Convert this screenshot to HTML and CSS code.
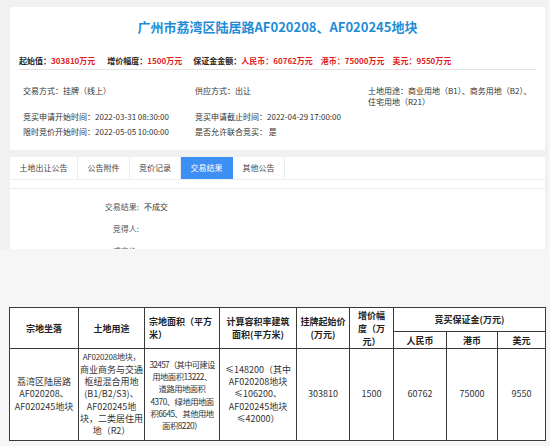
FILE: index.html
```html
<!DOCTYPE html>
<html lang="zh-CN">
<head>
<meta charset="utf-8">
<title>广州市荔湾区陆居路AF020208、AF020245地块</title>
<link rel="stylesheet" href="styles.css">
</head>
<body>
<div class="frame">
  <section class="card">
    <h1 class="title">广州市荔湾区陆居路AF020208、AF020245地块</h1>
    <div class="summary">
      <span class="item gap12"><b class="k">起始值：</b><b class="v">303810万元</b></span>
      <span class="item gap11"><b class="k">增价幅度：</b><b class="v">1500万元</b></span>
      <span class="item gap8"><b class="k">保证金金额：</b><b class="v">人民币：60762万元</b></span>
      <span class="item gap8"><b class="v">港币：75000万元</b></span>
      <span class="item"><b class="v">美元：9550万元</b></span>
    </div>
    <div class="info">
      <div class="cell">交易方式：挂牌（线上）</div>
      <div class="cell">供应方式：出让</div>
      <div class="cell">土地用途：商业用地（B1）、商务用地（B2）、<br>住宅用地（R21）</div>
      <div class="cell">竞买申请开始时间：2022-03-31 08:30:00</div>
      <div class="cell">竞买申请截止时间：2022-04-29 17:00:00</div>
      <div class="cell"></div>
      <div class="cell">限时竞价开始时间：2022-05-05 10:00:00</div>
      <div class="cell">是否允许联合竞买： 是</div>
      <div class="cell"></div>
    </div>
  </section>
  <section class="panel">
    <nav class="tabs">
      <span class="tab t1">土地出让公告</span>
      <span class="tab t2">公告附件</span>
      <span class="tab t3">竞价记录</span>
      <span class="tab t4 active">交易结果</span>
      <span class="tab t5">其他公告</span>
    </nav>
  </section>
  <section class="result">
    <div class="row"><span class="label">交易结果:</span><span class="val">不成交</span></div>
    <div class="row"><span class="label">竞得人:</span><span class="val"></span></div>
    <div class="row"><span class="label">成交价:</span><span class="val"></span></div>
  </section>
</div>

<div class="table-wrap">
  <table class="land">
    <colgroup>
      <col class="c1"><col class="c2"><col class="c3"><col class="c4"><col class="c5"><col class="c6"><col class="c7"><col class="c8"><col class="c9">
    </colgroup>
    <thead>
      <tr class="h1">
        <th rowspan="2">宗地坐落</th>
        <th rowspan="2">土地用途</th>
        <th rowspan="2" class="left">宗地面积（平方<br>米）</th>
        <th rowspan="2">计算容积率建筑<br>面积(平方米)</th>
        <th rowspan="2">挂牌起始价<br>(万元)</th>
        <th rowspan="2">增价幅<br>度（万<br>元）</th>
        <th colspan="3">竞买保证金(万元)</th>
      </tr>
      <tr class="h2">
        <th>人民币</th>
        <th>港币</th>
        <th>美元</th>
      </tr>
    </thead>
    <tbody>
      <tr class="body">
        <td>荔湾区陆居路<br>AF020208、<br>AF020245地块</td>
        <td class="use"><span class="sm">AF020208地块，</span><br>商业商务与交通<br>枢纽混合用地<br>(B1/B2/S3)、<br>AF020245地<br>块，二类居住用<br>地（R2）</td>
        <td class="area"><span class="tight">32457（其中可建设</span><br>用地面积13222、<br>道路用地面积<br>4370、绿地用地面<br>积6645、其他用地<br>面积8220）</td>
        <td>≤148200（其中<br>AF020208地块<br>≤106200、<br>AF020245地块<br>≤42000）</td>
        <td>303810</td>
        <td>1500</td>
        <td>60762</td>
        <td>75000</td>
        <td>9550</td>
      </tr>
    </tbody>
  </table>
</div>
</body>
</html>
```

FILE: styles.css
```css
* { box-sizing: border-box; }

html, body {
  margin: 0;
  padding: 0;
}

body {
  width: 550px;
  height: 446px;
  overflow: hidden;
  background: #f6f6f6;
  font-family: "Noto Sans CJK SC", "Noto Sans", "Liberation Sans", sans-serif;
  color: #333;
}

.frame {
  width: 548px;
  height: 249px;
  overflow: hidden;
  background: #f1f1f1;
  padding: 7px 0 0 10px;
}

/* top card */
.card {
  width: 535px;
  background: #fff;
  padding: 10px 9px 13px;
}

.title {
  margin: 0;
  font-size: 13px;
  line-height: 20px;
  font-weight: bold;
  color: #1f8dd6;
  text-align: center;
}

.summary {
  margin-top: 18px;
  font-size: 8px;
  line-height: 12px;
  white-space: nowrap;
  padding-bottom: 2px;
  border-bottom: 1px solid #e3e3e3;
  display: flex;
}

.summary .k { color: #222; }
.summary .v { color: #e0211d; }
.gap12 { margin-right: 12px; }
.gap11 { margin-right: 11px; }
.gap8 { margin-right: 8px; }

.info {
  margin-top: 15px;
  padding-left: 4px;
  display: grid;
  grid-template-columns: 172px 173px 172px;
  row-gap: 4px;
  font-size: 8px;
  line-height: 11px;
  color: #333;
}

.info .cell { white-space: nowrap; }

/* tabs */
.panel {
  width: 535px;
  margin-top: 7px;
  background: #fff;
  padding-bottom: 8px;
}

.tabs {
  display: flex;
  height: 23px;
  border-bottom: 1px solid #f0f0f0;
}

.tab {
  height: 22px;
  line-height: 22px;
  font-size: 8px;
  color: #444;
  text-align: center;
  border-right: 1px solid #ececec;
}

.t1 { width: 68px; }
.t2 { width: 52px; }
.t3 { width: 51px; }
.t4 { width: 52px; }
.t5 { width: 52px; }

.tab.active {
  background: #3e8ff3;
  color: #fff;
  border-right-color: #3e8ff3;
}

.result {
  width: 535px;
  height: 80px;
  background: #fff;
  border-top: 1px solid #ebebeb;
  padding-top: 7px;
}

.row {
  display: flex;
  height: 22px;
  line-height: 22px;
  font-size: 8px;
}

.label {
  width: 129px;
  text-align: right;
  color: #555;
}

.val {
  margin-left: 5px;
  color: #333;
}

/* table */
.table-wrap {
  margin-top: 58px;
  padding-left: 9px;
}

.land {
  width: 536px;
  table-layout: fixed;
  border-collapse: collapse;
  background: #fff;
  font-size: 9px;
  color: #333;
}

.c1 { width: 69px; }
.c2 { width: 66px; }
.c3 { width: 75px; }
.c4 { width: 77px; }
.c5 { width: 53px; }
.c6 { width: 44px; }
.c7 { width: 53px; }
.c8 { width: 51px; }
.c9 { width: 48px; }

.land th,
.land td {
  border: 1px solid #3a3a3a;
  padding: 0 1px;
  text-align: center;
  vertical-align: middle;
  white-space: nowrap;
}

.land th {
  font-weight: bold;
  color: #222;
  line-height: 13px;
}

.land th.left {
  text-align: left;
  padding-left: 4px;
}

.land td {
  font-weight: normal;
  line-height: 12.3px;
}

.land td.use .sm {
  font-size: 8px;
  letter-spacing: -0.2px;
}

.land td.area {
  font-size: 8.3px;
  letter-spacing: -0.5px;
  padding: 0;
}

.land td.area .tight {
  letter-spacing: -0.7px;
}

.h1 { height: 24px; }
.h2 { height: 17px; }
.body { height: 92px; }
```
